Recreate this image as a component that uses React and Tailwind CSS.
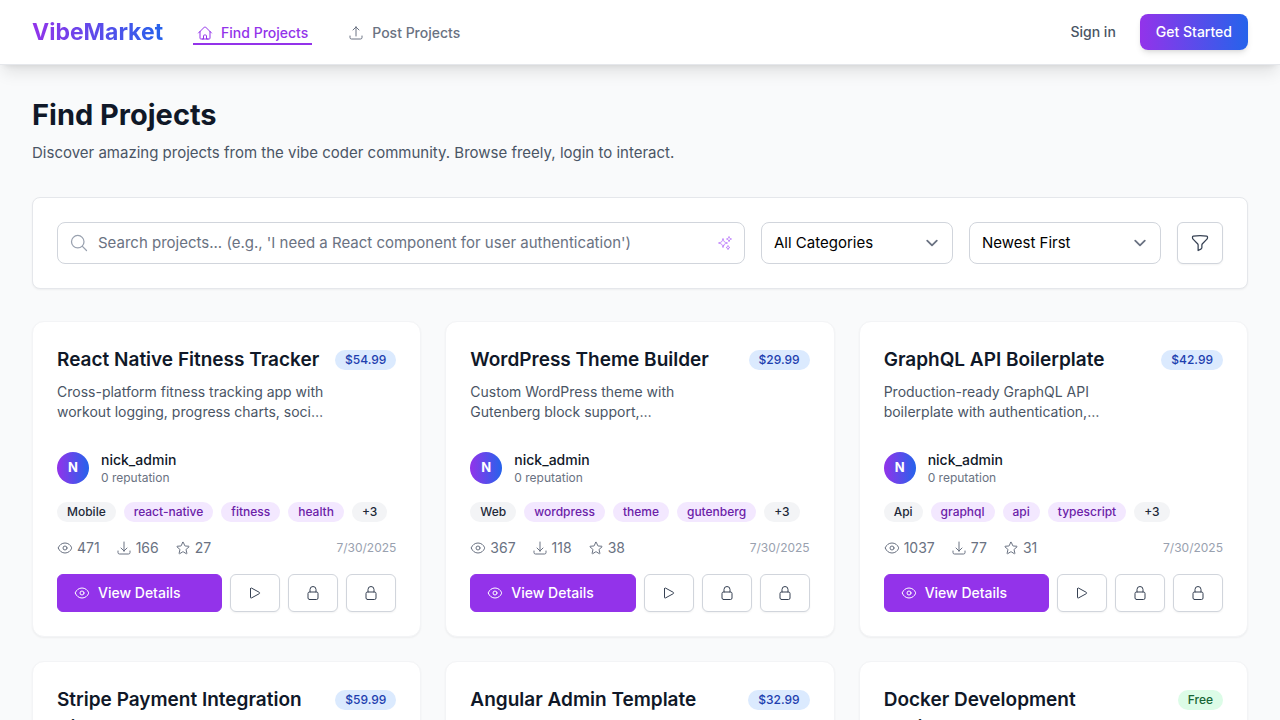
import {
  HiOutlineArrowDownTray,
  HiOutlineArrowUpTray,
  HiOutlineEye,
  HiOutlineFunnel,
  HiOutlineHome,
  HiOutlineLockClosed,
  HiOutlineMagnifyingGlass,
  HiOutlinePlay,
  HiOutlineSparkles,
  HiOutlineStar,
} from "react-icons/hi2";

const projects = [
  {
    title: "React Native Fitness Tracker",
    price: "$54.99",
    description:
      "Cross-platform fitness tracking app with workout logging, progress charts, social features and wearable sync.",
    category: "Mobile",
    tags: ["react-native", "fitness", "health"],
    views: 471,
    downloads: 166,
    stars: 27,
  },
  {
    title: "WordPress Theme Builder",
    price: "$29.99",
    description:
      "Custom WordPress theme with Gutenberg block support, internationalization and responsive layouts.",
    category: "Web",
    tags: ["wordpress", "theme", "gutenberg"],
    views: 367,
    downloads: 118,
    stars: 38,
  },
  {
    title: "GraphQL API Boilerplate",
    price: "$42.99",
    description:
      "Production-ready GraphQL API boilerplate with authentication, authorization, subscriptions and tests.",
    category: "Api",
    tags: ["graphql", "api", "typescript"],
    views: 1037,
    downloads: 77,
    stars: 31,
  },
  {
    title: "Stripe Payment Integration Kit",
    price: "$59.99",
    description: "Payment integration with subscriptions, invoices and webhooks.",
    category: "Web",
    tags: ["stripe", "payments"],
    views: 512,
    downloads: 143,
    stars: 42,
  },
  {
    title: "Angular Admin Template",
    price: "$32.99",
    description: "Admin dashboard template with charts, tables and forms.",
    category: "Web",
    tags: ["angular", "admin"],
    views: 298,
    downloads: 91,
    stars: 19,
  },
  {
    title: "Docker Development Environment",
    price: "Free",
    description: "Container setup for local development with databases and caching.",
    category: "Tool",
    tags: ["docker", "devops"],
    views: 624,
    downloads: 205,
    stars: 53,
  },
];

function Pill({ tone, children }) {
  const tones = {
    gray: "bg-gray-100 text-gray-800",
    purple: "bg-[#f3e8ff] text-[#6b21a8]",
    blue: "bg-[#dbeafe] text-[#1e40af]",
    green: "bg-[#dcfce7] text-[#166534]",
  };
  return (
    <span className={`shrink-0 rounded-full px-2.5 py-0.5 text-xs font-medium ${tones[tone]}`}>
      {children}
    </span>
  );
}

function Stat({ icon: Icon, label, value }) {
  return (
    <span className="flex items-center gap-1" title={label}>
      <Icon className="size-4" aria-hidden="true" />
      {value}
    </span>
  );
}

function IconButton({ icon: Icon, label }) {
  return (
    <button
      type="button"
      aria-label={label}
      className="rounded-md border border-gray-300 bg-white px-4 text-gray-700 shadow-xs hover:bg-gray-50"
    >
      <Icon className="size-4" />
    </button>
  );
}

function SelectBox({ id, label, options }) {
  return (
    <div className="relative w-48">
      <label htmlFor={id} className="sr-only">
        {label}
      </label>
      <select
        id={id}
        className="w-full appearance-none rounded-lg border border-gray-300 bg-white py-2 pr-10 pl-3 text-[15px] leading-6 text-black"
      >
        {options.map((option) => (
          <option key={option}>{option}</option>
        ))}
      </select>
      <svg
        className="pointer-events-none absolute inset-y-0 right-[9px] my-auto size-6 text-gray-500"
        viewBox="0 0 20 20"
        fill="none"
        stroke="currentColor"
        strokeWidth="1.5"
        strokeLinecap="round"
        strokeLinejoin="round"
        aria-hidden="true"
      >
        <path d="M6 8l4 4 4-4" />
      </svg>
    </div>
  );
}

function ProjectCard({ project }) {
  return (
    <article className="flex flex-col rounded-xl border border-gray-100 bg-white p-6 shadow-xs">
      <div className="mb-7 flex items-start justify-between gap-2">
        <div className="min-w-0 flex-1">
          <h2 className="line-clamp-2 text-[19px] leading-7 font-semibold text-gray-900">{project.title}</h2>
          <p className="mt-2 line-clamp-2 text-sm text-gray-600">{project.description}</p>
        </div>
        <div className="flex h-7 items-center">
          <Pill tone={project.price === "Free" ? "green" : "blue"}>{project.price}</Pill>
        </div>
      </div>
      <div className="mb-4 flex items-center gap-3">
        <span className="flex size-8 items-center justify-center rounded-full bg-linear-to-r/srgb from-[#9333ea] to-[#2563eb] text-[13px] font-bold text-white">
          N
        </span>
        <div>
          <p className="text-sm font-medium text-gray-900">nick_admin</p>
          <p className="text-xs text-gray-500">0 reputation</p>
        </div>
      </div>
      <div className="mb-4 flex flex-wrap gap-2">
        <Pill tone="gray">{project.category}</Pill>
        {project.tags.map((tag) => (
          <Pill key={tag} tone="purple">
            {tag}
          </Pill>
        ))}
        <Pill tone="gray">+3</Pill>
      </div>
      <div className="mb-4 flex items-center justify-between">
        <div className="flex items-center gap-4 text-sm text-gray-500">
          <Stat icon={HiOutlineEye} label="Views" value={project.views} />
          <Stat icon={HiOutlineArrowDownTray} label="Downloads" value={project.downloads} />
          <Stat icon={HiOutlineStar} label="Stars" value={project.stars} />
        </div>
        <time className="text-xs text-gray-400" dateTime="2025-07-30">
          7/30/2025
        </time>
      </div>
      <div className="flex gap-2">
        <button
          type="button"
          className="flex flex-1 items-center gap-2 rounded-md border border-[#9333ea] bg-[#9333ea] px-4 py-2 text-sm font-medium text-white hover:bg-[#7e22ce]"
        >
          <HiOutlineEye className="size-4" aria-hidden="true" />
          View Details
        </button>
        <IconButton icon={HiOutlinePlay} label="Play demo" />
        <IconButton icon={HiOutlineLockClosed} label="Sign in to save" />
        <IconButton icon={HiOutlineLockClosed} label="Sign in to download" />
      </div>
    </article>
  );
}

export default function App() {
  return (
    <div className="min-h-screen bg-gray-50 font-[Inter,sans-serif]">
      <header className="sticky top-0 z-10 border-b border-gray-200 bg-white shadow-lg">
        <div className="mx-auto flex h-16 max-w-7xl items-center justify-between px-8">
          <div className="flex items-center gap-[30px]">
            <a
              href="#home"
              className="bg-linear-to-r/srgb from-[#9333ea] to-[#2563eb] bg-clip-text text-[23px] leading-8 font-bold text-transparent"
            >
              VibeMarket
            </a>
            <nav className="flex gap-8 text-sm font-medium">
              <a
                href="#find"
                aria-current="page"
                className="flex items-center gap-2 border-b-2 border-[#9333ea] px-1 pt-1 text-[#9333ea]"
              >
                <HiOutlineHome className="size-4" aria-hidden="true" />
                Find Projects
              </a>
              <a
                href="#post"
                className="flex items-center gap-2 border-b-2 border-transparent px-1 pt-1 text-gray-500"
              >
                <HiOutlineArrowUpTray className="size-4" aria-hidden="true" />
                Post Projects
              </a>
            </nav>
          </div>
          <div className="flex items-center gap-6 text-sm font-medium">
            <a href="#signin" className="text-gray-600">
              Sign in
            </a>
            <a
              href="#start"
              className="rounded-lg bg-linear-to-r/srgb from-[#9333ea] to-[#2563eb] px-4 py-2 text-white shadow-md"
            >
              Get Started
            </a>
          </div>
        </div>
      </header>

      <main className="mx-auto max-w-7xl p-8">
        <h1 className="text-[29px] leading-9 font-bold text-gray-900">Find Projects</h1>
        <p className="mt-2 text-[15px] leading-6 text-gray-600">
          Discover amazing projects from the vibe coder community. Browse freely, login to interact.
        </p>

        <form
          className="mt-8 flex gap-4 rounded-lg border border-gray-200 bg-white p-6 shadow-xs"
          onSubmit={(event) => event.preventDefault()}
        >
          <div className="relative flex-1">
            <label htmlFor="search" className="sr-only">
              Search projects
            </label>
            <HiOutlineMagnifyingGlass
              className="pointer-events-none absolute inset-y-0 left-3 my-auto size-5 text-gray-400"
              aria-hidden="true"
            />
            <input
              id="search"
              type="text"
              placeholder="Search projects... (e.g., 'I need a React component for user authentication')"
              className="w-full rounded-lg border border-gray-300 bg-white px-10 py-2 text-[15px] leading-6 placeholder:text-gray-500"
            />
            <HiOutlineSparkles
              className="pointer-events-none absolute inset-y-0 right-3 my-auto size-4 text-[#c084fc]"
              aria-hidden="true"
            />
          </div>
          <SelectBox id="category" label="Category" options={["All Categories", "Web", "Mobile", "Api"]} />
          <SelectBox id="sort" label="Sort by" options={["Newest First", "Oldest First", "Most Popular"]} />
          <button
            type="button"
            aria-label="Filters"
            className="rounded-md border border-gray-300 bg-white px-3 text-gray-700 shadow-xs hover:bg-gray-50"
          >
            <HiOutlineFunnel className="size-5" />
          </button>
        </form>

        <section aria-label="Projects" className="mt-8 grid grid-cols-1 gap-6 md:grid-cols-2 lg:grid-cols-3">
          {projects.map((project) => (
            <ProjectCard key={project.title} project={project} />
          ))}
        </section>
      </main>
    </div>
  );
}
